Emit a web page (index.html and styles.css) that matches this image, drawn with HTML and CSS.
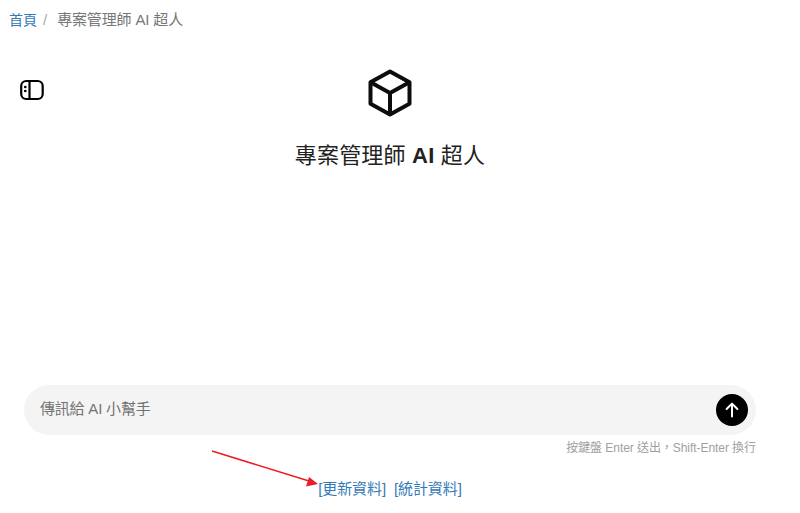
FILE: index.html
```html
<!DOCTYPE html>
<html lang="zh-Hant">
<head>
<meta charset="utf-8">
<title>專案管理師 AI 超人</title>
<link rel="stylesheet" href="styles.css">
</head>
<body>
<nav class="crumbs"><a class="crumb-link" href="#">首頁</a><span class="crumb-sep">/</span><span class="crumb-current">專案管理師 AI 超人</span></nav>
<main class="chat">
  <div class="chat-top">
    <button class="side-btn" aria-label="sidebar">
      <svg width="24" height="24" viewBox="0 0 24 24" fill="none" stroke="#000" stroke-width="2.200" stroke-linecap="round" stroke-linejoin="round"><rect x="1.200" y="3" width="21.500" height="18" rx="5"/><path d="M9.500 3v18"/><circle cx="5.300" cy="9" r=".7" fill="#000" stroke-width="1.300"/><circle cx="5.300" cy="13" r=".7" fill="#000" stroke-width="1.300"/></svg>
    </button>
    <div class="hero">
      <svg class="cube" width="44" height="48" viewBox="0 0 44 48" fill="none" stroke="#0d0d0d" stroke-width="4" stroke-linejoin="round" stroke-linecap="round"><path d="M22 2.500 41.500 13.300v21.400L22 45.500 2.500 34.700V13.300z"/><path d="M3 13.500 22 24l19-10.500M22 24v21"/></svg>
      <h1 class="title">專案管理師 <b class="title-ai">AI</b> 超人</h1>
    </div>
  </div>
  <div class="composer">
    <div class="input-pill">
      <span class="placeholder">傳訊給 AI 小幫手</span>
      <button class="send" aria-label="send"><svg width="20" height="20" viewBox="0 0 20 20" fill="none" stroke="#fff" stroke-width="2" stroke-linecap="round" stroke-linejoin="round"><path d="M10 16.500V3.800M4.600 9 10 3.600 15.400 9"/></svg></button>
    </div>
    <p class="hint">按鍵盤 Enter 送出，Shift-Enter 換行</p>
  </div>
  <div class="links"><a href="#" class="data-link">[更新資料]</a><a href="#" class="data-link">[統計資料]</a></div>
</main>
<svg class="annotation" width="120" height="50" viewBox="0 0 120 50"><path d="M1 1 98 31" stroke="#ee1c25" stroke-width="1.500"/><path d="M107 34 95 36.500 98 27z" fill="#ee1c25"/></svg>
</body>
</html>
```
FILE: styles.css
```css
* { box-sizing: border-box; }
html, body { margin: 0; height: 513px; overflow: hidden; background: #fff; }
body { font-family: "Liberation Sans", "Noto Sans CJK TC", sans-serif; color: #0d0d0d; position: relative; }
a { text-decoration: none; }
.crumbs { height: 40px; padding: 11px 0 0 9px; font-size: 15px; line-height: 18px; display: flex; }
.crumb-link { color: #337ab7; font-size: 14px; }
.crumb-sep { color: #aaa; margin: 0 10px 0 6px; }
.crumb-current { color: #777; letter-spacing: -0.15px; }
.chat { height: 473px; display: flex; flex-direction: column; }
.chat-top { flex: 1; position: relative; padding: 29px 20px 0 0; }
.side-btn { position: absolute; left: 20px; top: 38px; padding: 0; border: 0; background: none; width: 24px; height: 24px; }
.hero { display: flex; flex-direction: column; align-items: center; }
.cube { display: block; }
.title { margin: 25px 0 0; font-size: 22px; line-height: 28px; font-weight: 400; letter-spacing: 0.2px; color: #222; }
.title-ai { font-weight: 700; }
.composer { padding: 0 44px 0 24px; }
.input-pill { height: 50px; border-radius: 25px; background: #f4f4f4; display: flex; align-items: center; justify-content: space-between; padding: 0 8px 0 16px; }
.placeholder { font-size: 15px; line-height: 20px; color: #737373; letter-spacing: -0.2px; padding-bottom: 3px; }
.send { width: 32px; height: 32px; border: 0; padding: 0; border-radius: 50%; background: #000; display: flex; align-items: center; justify-content: center; }
.hint { margin: 5px 0 0; text-align: right; font-size: 12px; line-height: 16px; color: #a0a0a0; letter-spacing: -0.06px; }
.links { display: flex; justify-content: center; gap: 8px; margin: 23px 0 14px; padding-right: 20px; font-size: 15px; line-height: 20px; letter-spacing: -0.1px; }
.data-link { color: #337ab7; }
.annotation { position: absolute; left: 211px; top: 450px; }
```
